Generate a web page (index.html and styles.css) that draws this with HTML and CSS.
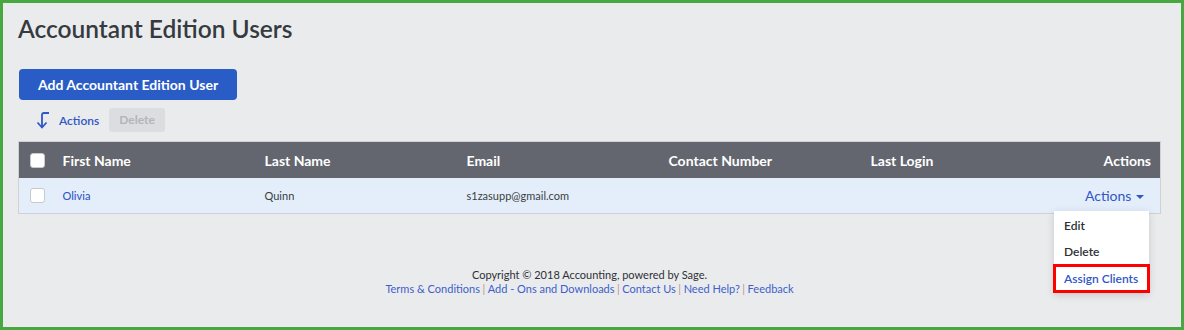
FILE: index.html
```html
<!DOCTYPE html>
<html lang="en">
<head>
    <meta charset="UTF-8">
    <title>Accountant Edition Users</title>
    <link rel="stylesheet" href="styles.css">
</head>
<body>
    <div class="frame">
        <h1 class="page-title">Accountant Edition Users</h1>

        <button class="btn-primary">Add Accountant Edition User</button>

        <div class="toolbar">
            <svg class="bulk-icon" width="16" height="18" viewBox="0 0 16 18">
                <path d="M14 2 H9 Q7 2 7 4 V16" fill="none" stroke="#2f57c6" stroke-width="1.8"/>
                <path d="M2.5 11.5 L7 16.5 L11.5 11.5" fill="none" stroke="#2f57c6" stroke-width="1.8"/>
            </svg>
            <a class="toolbar-link" href="#">Actions</a>
            <span class="btn-disabled">Delete</span>
        </div>

        <table class="users">
            <colgroup>
                <col style="width:34px">
                <col style="width:202px">
                <col style="width:202px">
                <col style="width:202px">
                <col style="width:202px">
                <col style="width:202px">
                <col>
            </colgroup>
            <thead>
                <tr>
                    <th class="cb-cell"><span class="check"></span></th>
                    <th>First Name</th>
                    <th>Last Name</th>
                    <th>Email</th>
                    <th>Contact Number</th>
                    <th>Last Login</th>
                    <th class="right">Actions</th>
                </tr>
            </thead>
            <tbody>
                <tr>
                    <td class="cb-cell"><span class="check"></span></td>
                    <td><a href="#" class="name-link">Olivia</a></td>
                    <td>Quinn</td>
                    <td>s1zasupp@gmail.com</td>
                    <td></td>
                    <td></td>
                    <td class="right action-cell">
                        <a href="#" class="row-actions">Actions <span class="caret"></span></a>
                        <ul class="menu">
                            <li>Edit</li>
                            <li>Delete</li>
                            <li class="highlight"><a href="#">Assign Clients</a></li>
                        </ul>
                    </td>
                </tr>
            </tbody>
        </table>

        <div class="footer">
            <p>Copyright &copy; 2018 Accounting, powered by Sage.</p>
            <p class="links">
                <a href="#">Terms &amp; Conditions</a><span class="sep">|</span><a href="#">Add - Ons and Downloads</a><span class="sep">|</span><a href="#">Contact Us</a><span class="sep">|</span><a href="#">Need Help?</a><span class="sep">|</span><a href="#">Feedback</a>
            </p>
        </div>
    </div>
</body>
</html>
```

FILE: styles.css
```css
body {
    margin: 0;
    font-family: Lato, "Open Sans", sans-serif;
    background-color: #eaebed;
    color: #333;
}
a {
    text-decoration: none;
    color: #2f57c6;
}
.frame {
    box-sizing: border-box;
    height: 330px;
    border: 3px solid #47a842;
    padding: 0 21px 0 15px;
}
.page-title {
    margin: 0;
    padding-top: 11px;
    font-size: 24.5px;
    font-weight: 600;
    line-height: 29px;
    color: #353a40;
}
.btn-primary {
    display: block;
    margin: 26px 0 0 1px;
    width: 218px;
    height: 31px;
    border: none;
    border-radius: 4px;
    background-color: #2a5cc6;
    color: #fff;
    font-family: inherit;
    font-size: 14px;
    font-weight: 700;
    padding: 0;
}
.toolbar {
    display: flex;
    align-items: center;
    height: 24px;
    margin-top: 8px;
    padding-left: 17px;
}
.bulk-icon {
    margin-right: 8px;
}
.toolbar-link {
    font-size: 12px;
    font-weight: 600;
    margin-right: 10px;
}
.btn-disabled {
    display: inline-block;
    background-color: #dcdde0;
    color: #b3b5b8;
    font-size: 12px;
    font-weight: 700;
    line-height: 24px;
    padding: 0 10px;
    border-radius: 3px;
}
.users {
    margin-top: 9px;
    width: 1143px;
    border-collapse: collapse;
    table-layout: fixed;
    border: 1px solid #cfd1d4;
}
.users th {
    background-color: #63666e;
    color: #fff;
    font-size: 14px;
    font-weight: 700;
    text-align: left;
    height: 36px;
    padding: 0 10px;
}
.users td {
    background-color: #e4eefa;
    font-size: 11px;
    color: #3a3d42;
    height: 35px;
    padding: 0 10px;
}
.users .cb-cell {
    padding: 0 0 0 11px;
}
.users .right {
    text-align: right;
    padding-right: 9px;
}
.check {
    display: block;
    width: 13px;
    height: 13px;
    background: #fff;
    border: 1px solid #c7c9cc;
    border-radius: 3px;
}
.name-link {
    font-weight: 500;
}
.action-cell {
    position: relative;
}
.row-actions {
    font-size: 14px;
    margin-right: 7px;
}
.caret {
    display: inline-block;
    width: 0;
    height: 0;
    border-left: 4px solid transparent;
    border-right: 4px solid transparent;
    border-top: 4px solid #2f57c6;
    vertical-align: middle;
    margin-left: 1px;
}
.menu {
    position: absolute;
    top: 33px;
    right: 11px;
    width: 95px;
    margin: 0;
    padding: 2px 0 0;
    list-style: none;
    background: #fff;
    box-shadow: 0 2px 8px rgba(0, 0, 0, 0.15);
    text-align: left;
    z-index: 2;
}
.menu li {
    font-size: 12px;
    font-weight: 600;
    color: #2d3035;
    line-height: 26px;
    padding: 0 10px;
}
.menu .highlight {
    border: 3px solid #f00;
    margin: -1px -1px 0;
    line-height: 23px;
    padding: 0 8px;
}
.footer {
    margin-top: 54px;
    width: 1143px;
    text-align: center;
    font-size: 11px;
    line-height: 14px;
    color: #2d3035;
}
.footer p {
    margin: 0;
}
.links a {
    color: #3d5fca;
}
.sep {
    color: #c4928a;
    padding: 0 2.5px;
}
```
